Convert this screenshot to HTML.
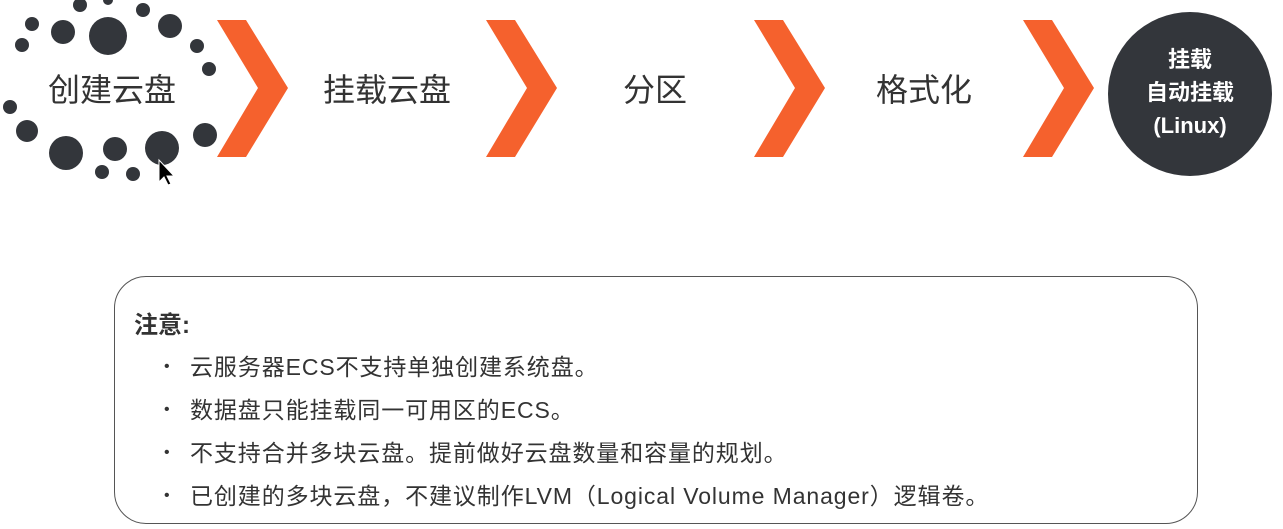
<!DOCTYPE html>
<html><head><meta charset="utf-8"><style>
html,body{margin:0;padding:0;background:#fff;width:1283px;height:529px;overflow:hidden;position:relative;font-family:"Liberation Sans","Noto Sans CJK SC",sans-serif;color:#333}
.lbl{position:absolute;top:70px;font-size:32px;line-height:40px;transform:translateX(-50%);white-space:nowrap;color:#333}
.box{position:absolute;left:114px;top:276px;width:1084px;height:248px;border:1.5px solid #555;border-radius:32px;box-sizing:border-box}
.t{position:absolute;left:134px;top:305px;font-size:24px;font-weight:bold;color:#333}
.li{position:absolute;left:190px;font-size:23px;line-height:30px;color:#333;white-space:nowrap;letter-spacing:0.9px}
.li:before{content:"•";position:absolute;left:-26px;font-size:16px}
</style></head><body>
<svg width="1283" height="200" style="position:absolute;left:0;top:0">
<g fill="#33363b">
<circle cx="80" cy="5" r="7"/><circle cx="108" cy="0" r="5"/><circle cx="143" cy="10" r="7"/>
<circle cx="32" cy="24" r="7"/><circle cx="63" cy="32" r="12"/><circle cx="108" cy="36" r="19"/>
<circle cx="170" cy="26" r="12"/><circle cx="22" cy="45" r="7"/><circle cx="197" cy="46" r="7"/>
<circle cx="209" cy="69" r="7"/><circle cx="10" cy="107" r="7"/><circle cx="27" cy="131" r="11"/>
<circle cx="205" cy="135" r="12"/><circle cx="66" cy="153" r="17"/><circle cx="115" cy="149" r="12"/>
<circle cx="162" cy="148" r="17"/><circle cx="102" cy="172" r="7"/><circle cx="133" cy="174" r="7"/>
<circle cx="1190" cy="94" r="82"/>
</g>
<g fill="#f5612d">
<polygon points="217,20 246,20 288,88 246,157 217,157 258,88"/>
<polygon points="486,20 515,20 557,88 515,157 486,157 527,88"/>
<polygon points="754,20 783,20 825,88 783,157 754,157 795,88"/>
<polygon points="1023,20 1052,20 1094,88 1052,157 1023,157 1064,88"/>
</g>
<path d="M159,160 l0,22 l5,-5 l4,8 l3,-1 l-4,-8 l7,0 z" fill="#000" stroke="#fff" stroke-width="1"/>
</svg>
<div class="lbl" style="left:112px">创建云盘</div>
<div class="lbl" style="left:387px">挂载云盘</div>
<div class="lbl" style="left:655px">分区</div>
<div class="lbl" style="left:924px">格式化</div>
<div style="position:absolute;left:1110px;width:160px;top:43px;text-align:center;color:#fff;font-weight:bold;font-size:22px;line-height:33px">挂载<br>自动挂载<br>(Linux)</div>
<div class="box"></div>
<div class="t">注意:</div>
<div class="li" style="top:352px">云服务器ECS不支持单独创建系统盘。</div>
<div class="li" style="top:395px">数据盘只能挂载同一可用区的ECS。</div>
<div class="li" style="top:438px">不支持合并多块云盘。提前做好云盘数量和容量的规划。</div>
<div class="li" style="top:481px">已创建的多块云盘，不建议制作LVM（Logical Volume Manager）逻辑卷。</div>
</body></html>
